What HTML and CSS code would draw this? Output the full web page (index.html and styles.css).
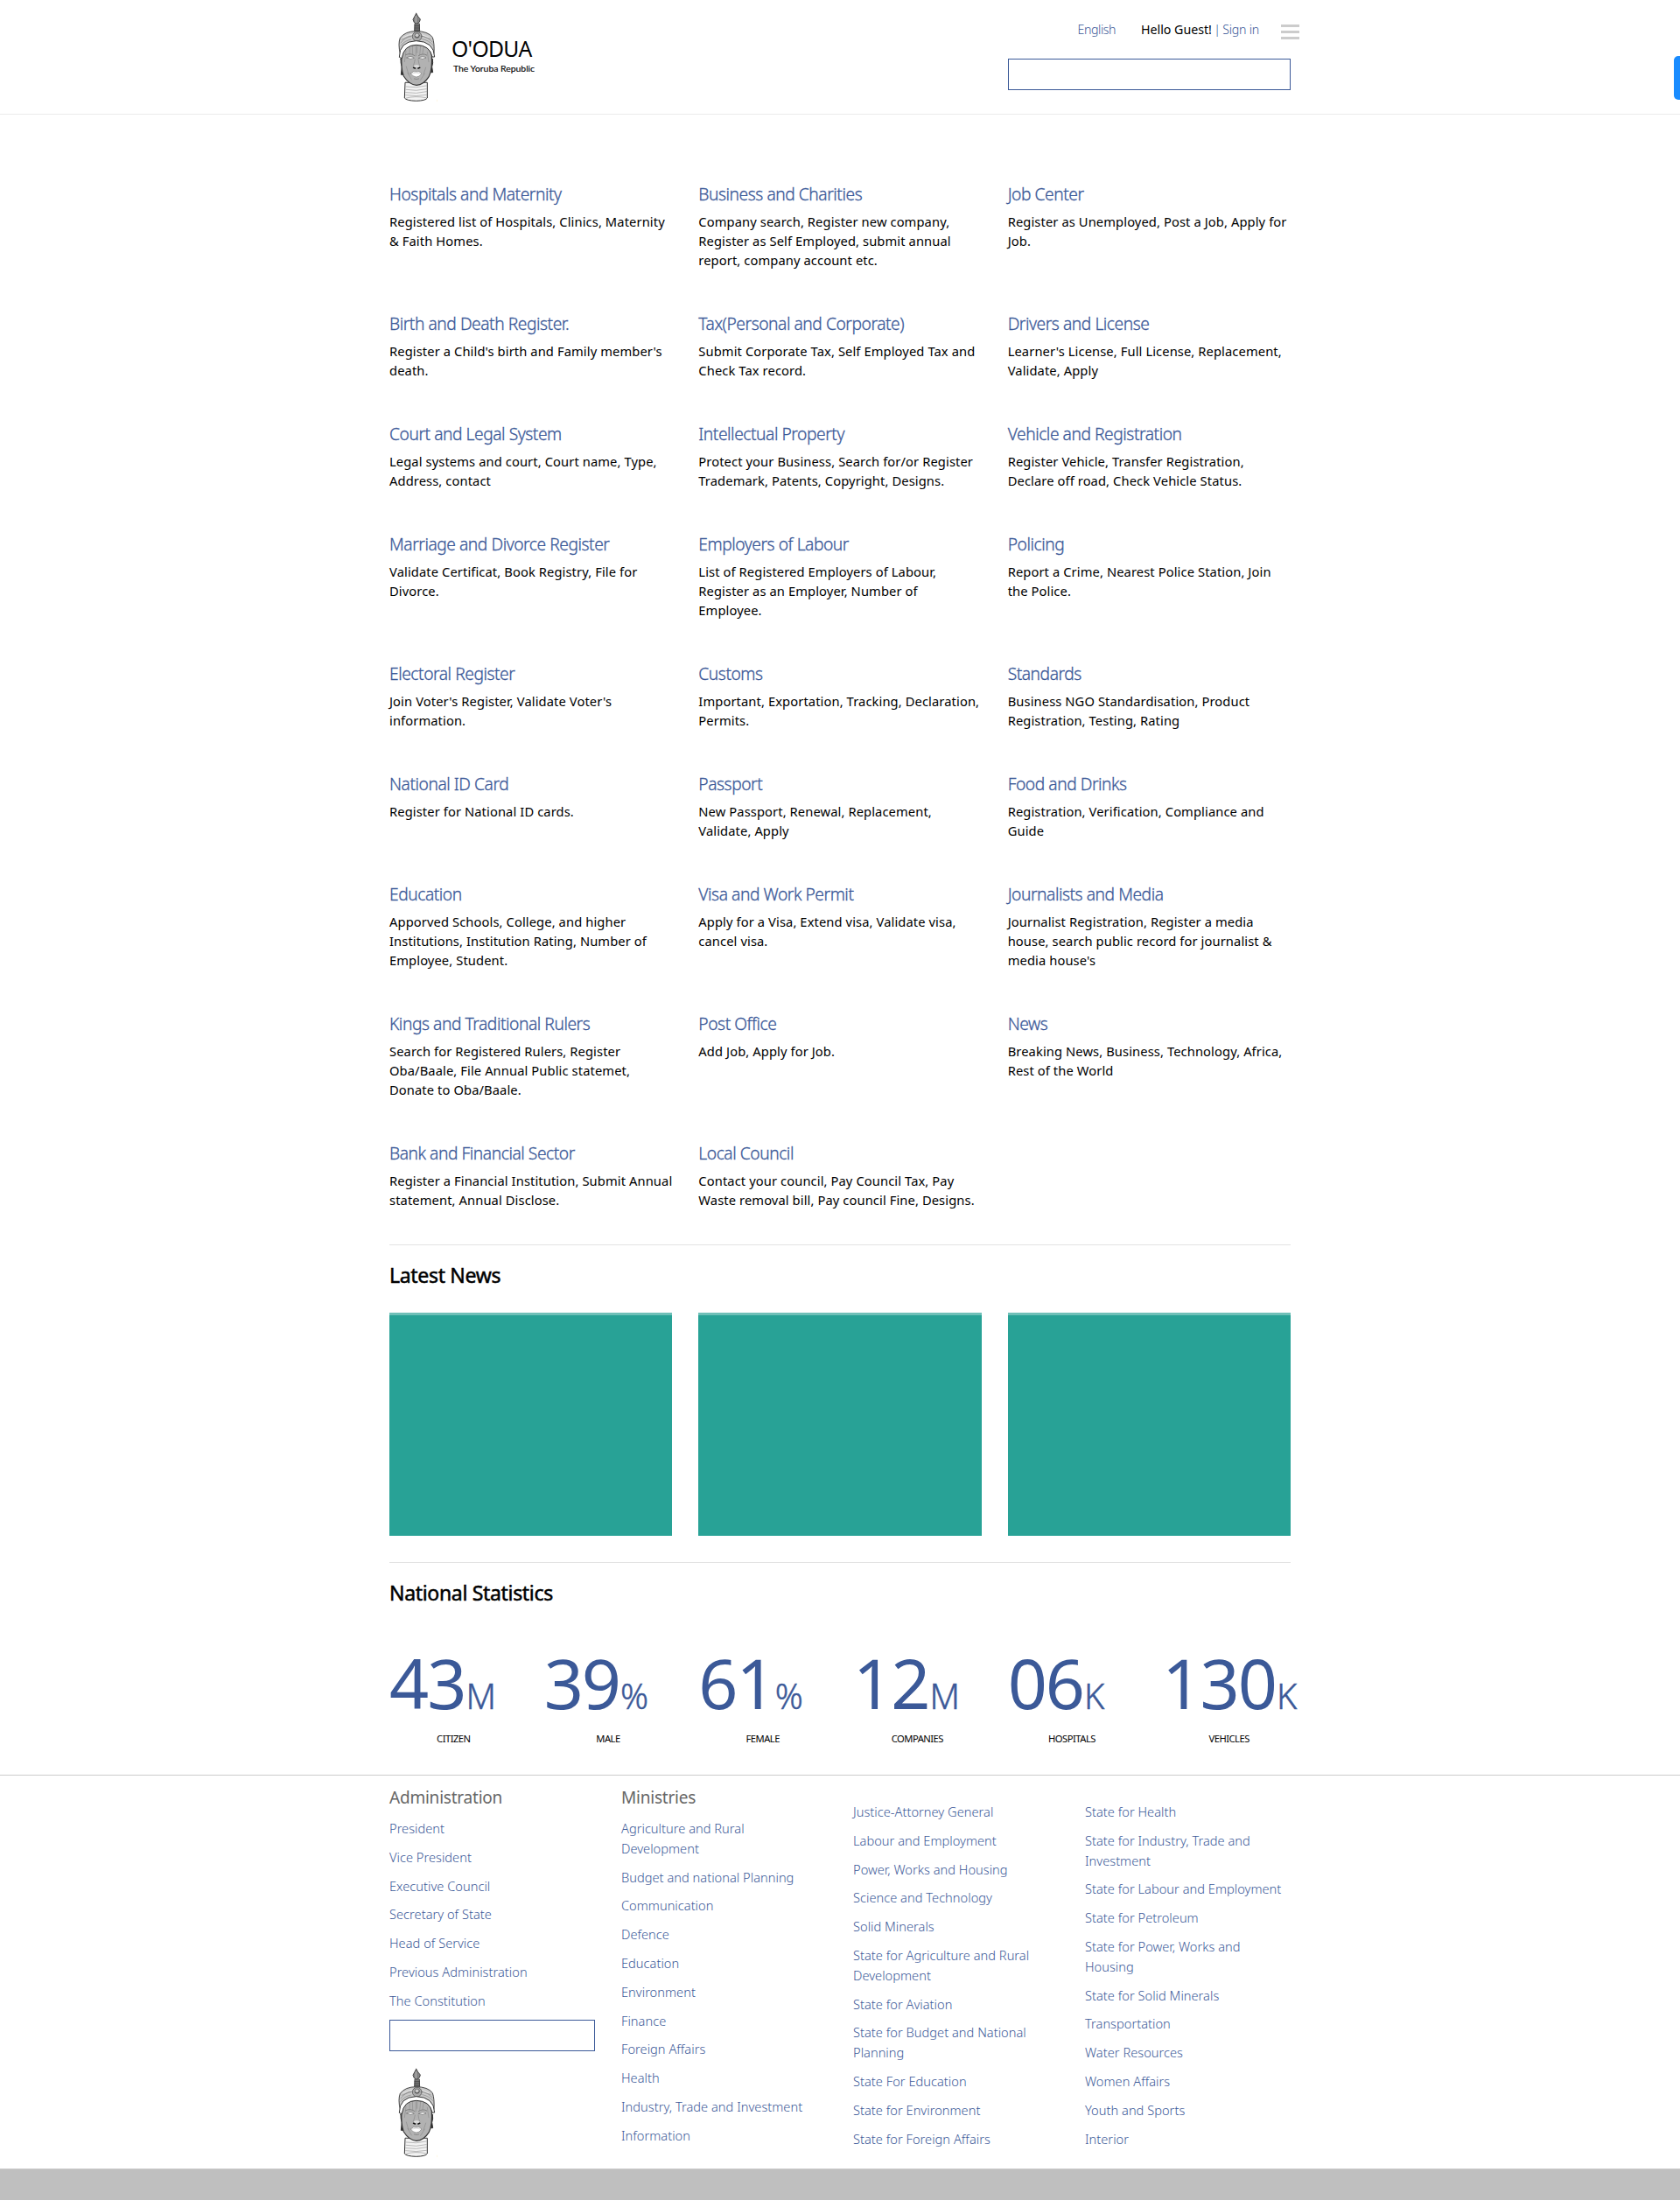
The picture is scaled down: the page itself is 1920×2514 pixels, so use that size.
FILE: index.html
```
<!DOCTYPE html>
<html lang="en">
<head>
<meta charset="utf-8">
<title>O'ODUA - The Yoruba Republic</title>
<link rel="stylesheet" href="styles.css">
</head>
<body>
<svg class="defs" width="0" height="0" aria-hidden="true">
  <symbol id="head" viewBox="45 30 165 330">
    <g stroke-linejoin="round" stroke-linecap="round">
      <path d="M99 284 L97 336 Q103 345 137 346 Q170 345 175 336 L175 284 Z" fill="#f3f3f3" stroke="#333" stroke-width="3"/>
      <path d="M102 297q34 6 70-3M102 307q35 7 70-2M101 317q36 6 72-3M101 326q36 6 72-1M103 336q30-8 68-1" fill="none" stroke="#aaa" stroke-width="2.4"/>
      <path d="M132 82 L131 112 H149 L148 82 Z" fill="#777" stroke="#444" stroke-width="3"/>
      <path d="M132 89h16M132 96h16M132 103h16" stroke="#333" stroke-width="2"/>
      <path d="M137 46 Q131 57 126 67 Q128 80 139 82 Q151 77 151 66 Q143 58 137 46Z" fill="#858585" stroke="#484848" stroke-width="3"/>
      <path d="M136 56v20" stroke="#bbb" stroke-width="3"/>
      <path d="M82 184 Q74 150 82 130 Q99 107 137 107 Q177 107 193 128 Q200 148 198 184 Z" fill="#cacaca" stroke="#444" stroke-width="3"/>
      <path d="M88 136q48-30 98-2M84 147q14-20 35-22M159 124q20 5 33 19M84 157q12-18 36-22M158 134q22 4 36 20" fill="none" stroke="#8a8a8a" stroke-width="2.2"/>
      <path d="M92 128q40-23 88 0" fill="none" stroke="#e8e8e8" stroke-width="3"/>
      <circle cx="140" cy="125" r="16" fill="#aaa" stroke="#666" stroke-width="3"/>
      <circle cx="140" cy="122" r="8" fill="#ccc" stroke="#555" stroke-width="2.4"/>
      <path d="M134 126q6 5 12 0" fill="none" stroke="#333" stroke-width="2.4"/>
      <path d="M84 203 Q91 208 90 221 L92 256 L85 256 L88 229 Q83 216 84 203ZM193 203 Q186 208 187 222 L184 248 L194 248 L191 229 Q196 216 193 203Z" fill="#333" stroke="#333" stroke-width="3"/>
      <path d="M87 188 Q94 151 137 148 Q181 151 190 188 Q193 238 181 262 Q163 291 138 292 Q112 290 94 261 Q84 236 87 188Z" fill="#b2b2b2" stroke="#333" stroke-width="3.5"/>
      <path d="M115 162l-1 25M124 156l1 32M136 153v38M140 157v24M152 158l-3 30M162 163l-3 20M102 175l-5 37M175 178l5 34M103 228l8 27M170 231l-8 24M108 250l13 23M166 252l-14 22" fill="none" stroke="#8c8c8c" stroke-width="2"/>
      <path d="M101 188q16-8 31 3M145 191q14-10 28-2" fill="none" stroke="#777" stroke-width="2.5"/>
      <path d="M105 198q12-10 25 1q-12 8-25-1ZM146 199q13-10 25-1q-12 9-25 1Z" fill="#f1f1f1" stroke="#666" stroke-width="2"/>
      <path d="M133 204q-3 15-6 22M144 204q2 15 5 22" fill="none" stroke="#888" stroke-width="2"/>
      <path d="M128 226q4 12 10 3q7 9 11-3q-11-7-21 0Z" fill="#ddd"/>
      <path d="M128 232l5 2M144 234l5-2" stroke="#111" stroke-width="5"/>
      <path d="M118 252q10-11 19-6q10-5 19 6q-9 13-19 12q-11 0-19-12Z" fill="#fff" stroke="#777" stroke-width="2"/>
      <path d="M121 252q15-6 32 0" fill="none" stroke="#bbb" stroke-width="1.6"/>
      <path d="M130 270q8 4 16 0" fill="none" stroke="#777" stroke-width="2"/>
      <path d="M79 195 Q79 142 137 140 Q198 142 200 195 L192 195 Q184 155 137 154 Q94 155 88 199 Z" fill="#fff" stroke="#333" stroke-width="3"/>
      <path d="M211 342v5" stroke="#fbe6b0" stroke-width="4"/>
    </g>
  </symbol>
</svg>

<header class="site-header">
  <div class="container header-row">
    <a class="brand">
      <svg class="head"><use href="#head"/></svg>
      <span class="brand-text"><span class="brand-name">O'ODUA</span><span class="brand-tag">The Yoruba Republic</span></span>
    </a>
    <div class="header-tools">
      <div class="user-bar">
        <a class="lang">English</a>
        <span class="user"><b>Hello Guest!</b> <i>|</i> <a>Sign in</a></span>
        <span class="burger"><i></i><i></i><i></i></span>
      </div>
      <input class="box" type="text" aria-label="Search">
    </div>
  </div>
</header>
<div class="side-tab"></div>

<main class="container">
  <section class="services">
    <article><h2>Hospitals and Maternity</h2><p>Registered list of Hospitals, Clinics, Maternity<br>&amp; Faith Homes.</p></article>
    <article><h2>Business and Charities</h2><p>Company search, Register new company,<br>Register as Self Employed, submit annual<br>report, company account etc.</p></article>
    <article><h2>Job Center</h2><p>Register as Unemployed, Post a Job, Apply for<br>Job.</p></article>
    <article><h2>Birth and Death Register.</h2><p>Register a Child's birth and Family member's<br>death.</p></article>
    <article><h2>Tax(Personal and Corporate)</h2><p>Submit Corporate Tax, Self Employed Tax and<br>Check Tax record.</p></article>
    <article><h2>Drivers and License</h2><p>Learner's License, Full License, Replacement,<br>Validate, Apply</p></article>
    <article><h2>Court and Legal System</h2><p>Legal systems and court, Court name, Type,<br>Address, contact</p></article>
    <article><h2>Intellectual Property</h2><p>Protect your Business, Search for/or Register<br>Trademark, Patents, Copyright, Designs.</p></article>
    <article><h2>Vehicle and Registration</h2><p>Register Vehicle, Transfer Registration,<br>Declare off road, Check Vehicle Status.</p></article>
    <article><h2>Marriage and Divorce Register</h2><p>Validate Certificat, Book Registry, File for<br>Divorce.</p></article>
    <article><h2>Employers of Labour</h2><p>List of Registered Employers of Labour,<br>Register as an Employer, Number of<br>Employee.</p></article>
    <article><h2>Policing</h2><p>Report a Crime, Nearest Police Station, Join<br>the Police.</p></article>
    <article><h2>Electoral Register</h2><p>Join Voter's Register, Validate Voter's<br>information.</p></article>
    <article><h2>Customs</h2><p>Important, Exportation, Tracking, Declaration,<br>Permits.</p></article>
    <article><h2>Standards</h2><p>Business NGO Standardisation, Product<br>Registration, Testing, Rating</p></article>
    <article><h2>National ID Card</h2><p>Register for National ID cards.</p></article>
    <article><h2>Passport</h2><p>New Passport, Renewal, Replacement,<br>Validate, Apply</p></article>
    <article><h2>Food and Drinks</h2><p>Registration, Verification, Compliance and<br>Guide</p></article>
    <article><h2>Education</h2><p>Apporved Schools, College, and higher<br>Institutions, Institution Rating, Number of<br>Employee, Student.</p></article>
    <article><h2>Visa and Work Permit</h2><p>Apply for a Visa, Extend visa, Validate visa,<br>cancel visa.</p></article>
    <article><h2>Journalists and Media</h2><p>Journalist Registration, Register a media<br>house, search public record for journalist &amp;<br>media house's</p></article>
    <article><h2>Kings and Traditional Rulers</h2><p>Search for Registered Rulers, Register<br>Oba/Baale, File Annual Public statemet,<br>Donate to Oba/Baale.</p></article>
    <article><h2>Post Office</h2><p>Add Job, Apply for Job.</p></article>
    <article><h2>News</h2><p>Breaking News, Business, Technology, Africa,<br>Rest of the World</p></article>
    <article><h2>Bank and Financial Sector</h2><p>Register a Financial Institution, Submit Annual<br>statement, Annual Disclose.</p></article>
    <article><h2>Local Council</h2><p>Contact your council, Pay Council Tax, Pay<br>Waste removal bill, Pay council Fine, Designs.</p></article>
  </section>

  <section class="news">
    <h3>Latest News</h3>
    <div class="tiles"><div class="tile"></div><div class="tile"></div><div class="tile"></div></div>
  </section>

  <section class="stats">
    <h3>National Statistics</h3>
    <div class="figures">
      <div class="figure"><div class="value">43<small>M</small></div><div class="label">CITIZEN</div></div>
      <div class="figure"><div class="value">39<small>%</small></div><div class="label">MALE</div></div>
      <div class="figure"><div class="value">61<small>%</small></div><div class="label">FEMALE</div></div>
      <div class="figure"><div class="value">12<small>M</small></div><div class="label">COMPANIES</div></div>
      <div class="figure"><div class="value">06<small>K</small></div><div class="label">HOSPITALS</div></div>
      <div class="figure"><div class="value">130<small>K</small></div><div class="label label-last">VEHICLES</div></div>
    </div>
  </section>
</main>

<footer class="site-footer">
  <div class="container footer-cols">
    <div>
      <h4>Administration</h4>
      <ul>
        <li>President</li><li>Vice President</li><li>Executive Council</li><li>Secretary of State</li><li>Head of Service</li><li>Previous Administration</li><li>The Constitution</li>
      </ul>
      <input class="box" type="text" aria-label="Footer search">
      <svg class="head"><use href="#head"/></svg>
    </div>
    <div>
      <h4>Ministries</h4>
      <ul>
        <li>Agriculture and Rural<br>Development</li><li>Budget and national Planning</li><li>Communication</li><li>Defence</li><li>Education</li><li>Environment</li><li>Finance</li><li>Foreign Affairs</li><li>Health</li><li>Industry, Trade and Investment</li><li>Information</li>
      </ul>
    </div>
    <div class="untitled">
      <ul>
        <li>Justice-Attorney General</li><li>Labour and Employment</li><li>Power, Works and Housing</li><li>Science and Technology</li><li>Solid Minerals</li><li>State for Agriculture and Rural<br>Development</li><li>State for Aviation</li><li>State for Budget and National<br>Planning</li><li>State For Education</li><li>State for Environment</li><li>State for Foreign Affairs</li>
      </ul>
    </div>
    <div class="untitled">
      <ul>
        <li>State for Health</li><li>State for Industry, Trade and<br>Investment</li><li>State for Labour and Employment</li><li>State for Petroleum</li><li>State for Power, Works and<br>Housing</li><li>State for Solid Minerals</li><li>Transportation</li><li>Water Resources</li><li>Women Affairs</li><li>Youth and Sports</li><li>Interior</li>
      </ul>
    </div>
  </div>
</footer>
<div class="bottom-bar"></div>
</body>
</html>
```
FILE: styles.css
```
* { box-sizing: border-box; }
body {
  margin: 0;
  background: #fff;
  color: #000;
  font-family: "Noto Sans", "Open Sans", sans-serif;
  font-size: 14.7px;
  line-height: 22px;
}
h2, h3, h4, p, ul { margin: 0; padding: 0; font-weight: 400; }
i { font-style: normal; }
.defs { display: block; position: absolute; }
.container { width: 1030px; margin: 0 auto; }
.head { display: block; width: 55px; height: 110px; flex: none; }
.box {
  display: block;
  width: 100%;
  height: 36px;
  padding: 0 8px;
  border: 1px solid #3b5998;
  border-radius: 0;
  background: #fff;
}

/* header */
.site-header { height: 131px; border-bottom: 1px solid #ebebeb; }
.header-row { display: flex; justify-content: space-between; }
.brand { display: flex; padding-top: 10px; }
.brand-text { display: flex; flex-direction: column; padding: 28px 0 0 16px; white-space: nowrap; }
.brand-name { font-size: 24.7px; line-height: 36px; letter-spacing: -.7px; }
.brand-tag {
  padding-left: 2px;
  font: 400 10.4px/12px Lato, sans-serif;
  margin-top: -2px;
  -webkit-text-stroke: .15px #000;
}
.header-tools { width: 323.3px; padding-top: 23px; }
.user-bar {
  display: flex;
  justify-content: flex-end;
  height: 44px;
  margin-right: -10px;
  font-size: 14.2px;
  font-weight: 300;
  color: #3b5998;
}
.lang { margin-right: 29px; letter-spacing: -.45px; }
.user { margin-right: 25px; letter-spacing: -.25px; }
.user b { font-weight: 400; letter-spacing: 0; color: #000; }
.user i { margin: 0 -1px; }
.burger { display: flex; flex-direction: column; gap: 3.5px; width: 21px; padding-top: 5px; }
.burger i { height: 3.4px; background: #ccc; }
.side-tab {
  position: fixed;
  top: 64px;
  right: 0;
  width: 7.5px;
  height: 50px;
  border-radius: 5px 0 0 5px;
  background: #1a8cff;
}

/* services */
.services {
  display: grid;
  grid-template-columns: repeat(3, 1fr);
  gap: 50px 30px;
  padding: 79px 0 40px;
  letter-spacing: .11px;
  white-space: nowrap;
}
.services h2 {
  margin-bottom: 8px;
  font-size: 19.2px;
  font-weight: 300;
  line-height: 24px;
  letter-spacing: -.44px;
  color: #3b5998;
  -webkit-text-stroke: .3px #3b5998;
}

/* news and statistics */
.news, .stats { border-top: 1px solid #e3e3e3; }
h3 {
  padding-top: 18px;
  font-size: 23px;
  line-height: 32px;
  letter-spacing: -.32px;
  -webkit-text-stroke: .5px #000;
}
.tiles { display: grid; grid-template-columns: repeat(3, 1fr); gap: 30px; padding: 27px 0 30px; }
.tile { height: 255px; background: #28a296; border-top: 3px solid #6fc0b8; }
.figures { display: grid; grid-template-columns: repeat(6, minmax(0, 1fr)); gap: 30px; padding-top: 39px; height: 192px; }
.value {
  height: 96px;
  font-size: 79px;
  line-height: 96px;
  letter-spacing: -2px;
  white-space: nowrap;
  color: #3b5998;
}
.value small { margin-left: 1px; font-size: 39.5px; font-weight: 300; letter-spacing: 0; -webkit-text-stroke: .5px #3b5998; }
.label { padding-top: 8px; text-align: center; font-size: 11.2px; line-height: 16px; letter-spacing: -.5px; }
.label-last { padding-left: 6px; }

/* footer */
.site-footer { height: 450px; border-top: 1px solid #ccc; }
.footer-cols { display: grid; grid-template-columns: repeat(4, 1fr); gap: 30px; padding-top: 10px; }
.footer-cols h4 { margin-bottom: 9px; font-size: 19px; line-height: 30px; letter-spacing: -.22px; color: #666; }
.footer-cols ul { list-style: none; font-size: 14.6px; font-weight: 300; line-height: 22.8px; letter-spacing: .03px; color: #3b5998; white-space: nowrap; }
.footer-cols li { margin-bottom: 10px; }
.footer-cols .head { margin-top: 15px; }
.untitled { padding-top: 20px; }
.bottom-bar { height: 36px; border-top: 1px solid #ccc; background: #bfbfbf; }
```
